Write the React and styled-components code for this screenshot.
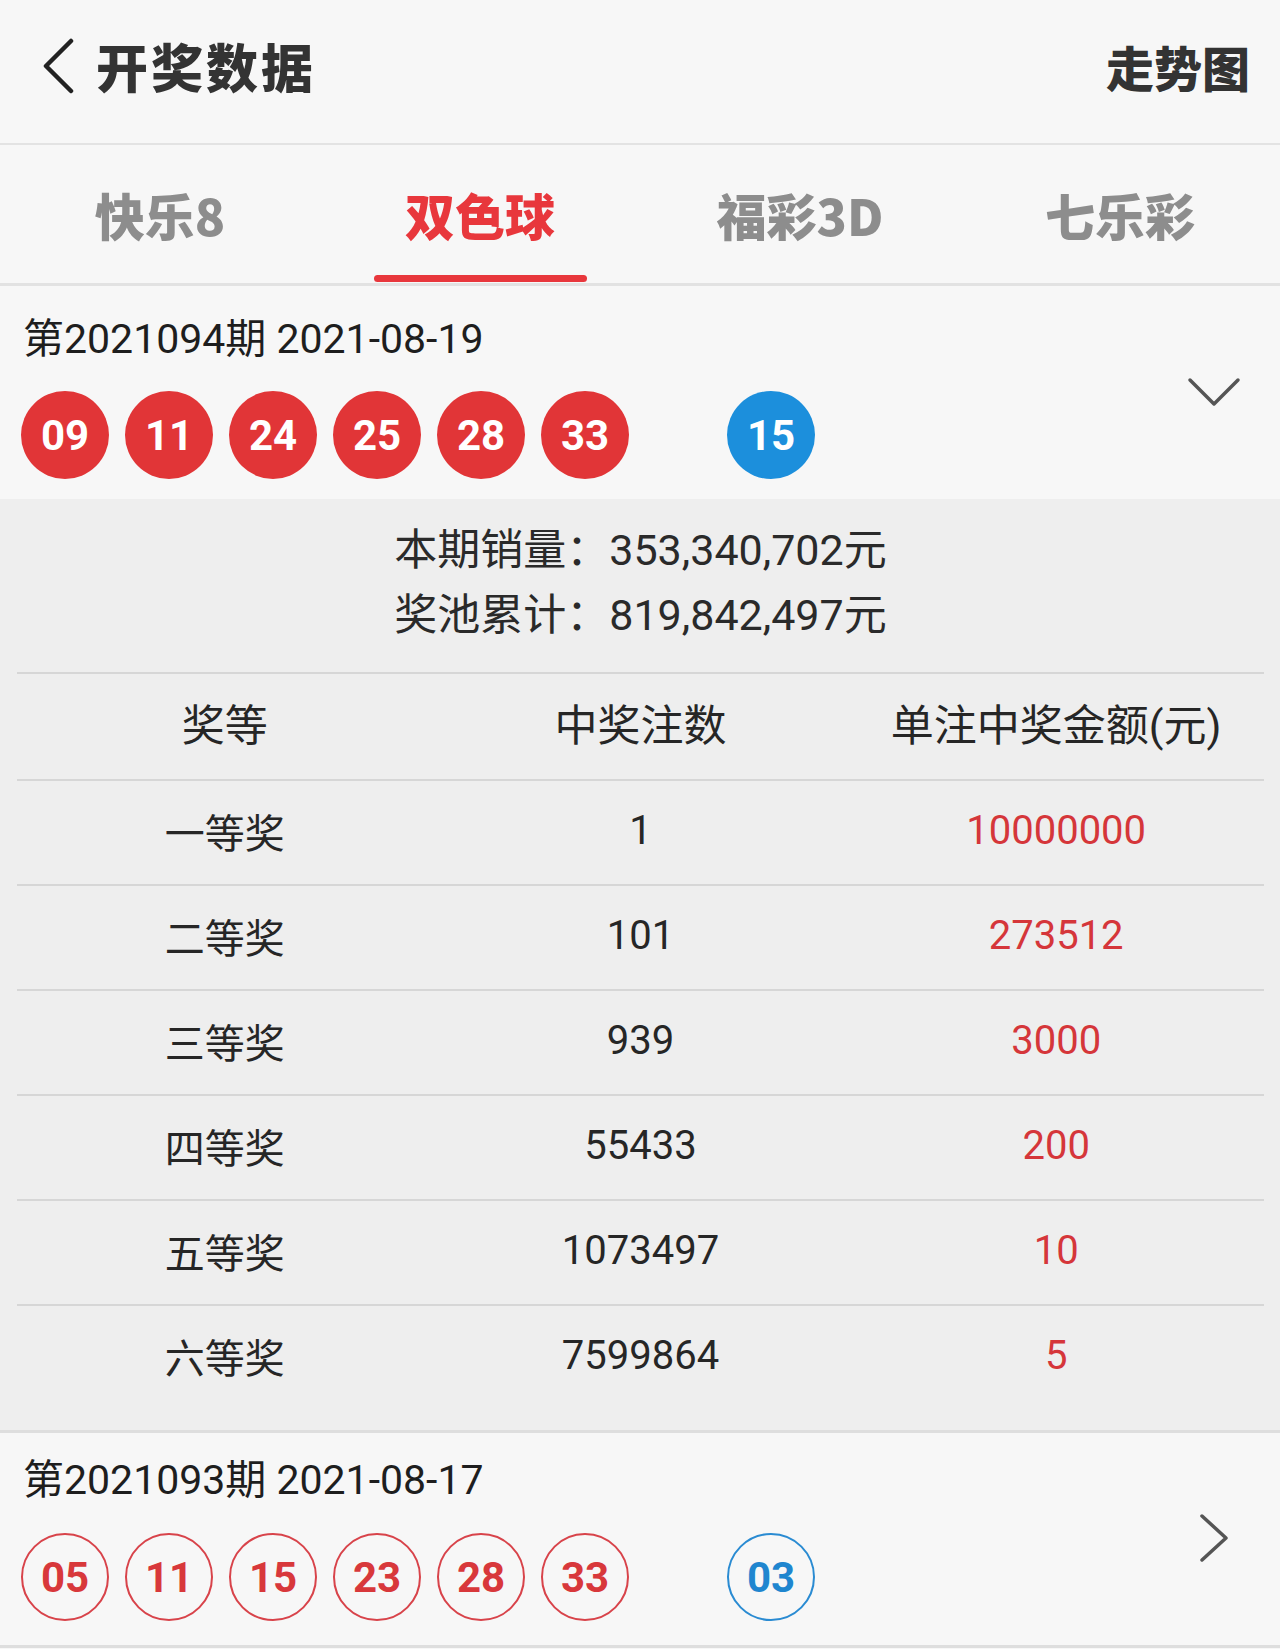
import React from "react";
import styled, { createGlobalStyle } from "styled-components";

const Global = createGlobalStyle`
  html, body { margin: 0; padding: 0; background: #f7f7f7; }
  body { font-family: "Roboto", "Noto Sans CJK SC", sans-serif; color: #222; }
  * { box-sizing: border-box; }
`;

const Page = styled.div`
  width: 1280px;
  background: #f7f7f7;
`;

const Header = styled.header`
  height: 143px;
  display: flex;
  align-items: center;
  padding: 0 30px 12px 40px;
`;

const BackButton = styled.button`
  border: 0;
  background: none;
  padding: 0;
  display: flex;
  align-items: center;
  cursor: pointer;
`;

const Title = styled.h1`
  margin: 0 0 0 20px;
  font-family: "Noto Sans CJK SC", sans-serif;
  font-weight: 900;
  font-size: 52px;
  letter-spacing: 3px;
  color: #333;
  line-height: 1;
`;

const TrendLink = styled.a`
  margin-left: auto;
  font-family: "Noto Sans CJK SC", sans-serif;
  font-weight: 900;
  font-size: 48px;
  color: #333;
  line-height: 1;
  text-decoration: none;
`;

const TabBar = styled.nav`
  height: 143px;
  border-top: 2px solid #e3e3e3;
  border-bottom: 3px solid #e2e2e2;
  display: grid;
  grid-template-columns: repeat(4, 1fr);
`;

const Tab = styled.div`
  position: relative;
  display: flex;
  align-items: center;
  justify-content: center;
  padding-top: 0;
  font-family: "Noto Sans CJK SC", sans-serif;
  font-weight: 900;
  font-size: 50px;
  color: ${(p) => (p.$active ? "#e8373c" : "#8d8d8d")};
  &::after {
    content: "";
    display: ${(p) => (p.$active ? "block" : "none")};
    position: absolute;
    left: 50%;
    bottom: 1px;
    width: 213px;
    height: 7px;
    margin-left: -106px;
    border-radius: 4px;
    background: #e8373c;
  }
`;

const DrawCard = styled.section`
  display: flex;
  align-items: center;
  padding: ${(p) => (p.$compact ? "21px 39px 24px 21px" : "27px 39px 20px 21px")};
  border-top: ${(p) => (p.$compact ? "3px solid #dedede" : "0")};
  border-bottom: ${(p) => (p.$compact ? "3px solid #dedede" : "0")};
  background: #f7f7f7;
`;

const DrawInfo = styled.div`
  flex: 1;
  display: flex;
  flex-direction: column;
`;

const IssueText = styled.div`
  font-size: 41px;
  line-height: 52px;
  color: #1e1e1e;
  padding-left: 2px;
`;

const BallRow = styled.div`
  display: flex;
  gap: 16px;
  margin-top: ${(p) => (p.$compact ? "27px" : "26px")};
`;

const RED = "#e13537";
const BLUE = "#1c8fdc";

const Ball = styled.div`
  width: 88px;
  height: 88px;
  border-radius: 50%;
  display: flex;
  align-items: center;
  justify-content: center;
  font-family: "Roboto", sans-serif;
  font-weight: 700;
  font-size: 42px;
  margin-left: ${(p) => (p.$blue ? "82px" : "0")};
  background: ${(p) => (p.$hollow ? "transparent" : p.$blue ? BLUE : RED)};
  color: ${(p) => (p.$hollow ? (p.$blue ? "#1f86cf" : "#d8383b") : "#fff")};
  border: ${(p) =>
    p.$hollow ? `2px solid ${p.$blue ? "#2a8bd2" : "#d8434a"}` : "0"};
`;

const IconSlot = styled.div`
  display: flex;
  align-items: center;
  margin-right: ${(p) => p.$offset || 0}px;
  margin-top: ${(p) => p.$lift || 0}px;
`;

const Panel = styled.div`
  background: #eeeeee;
  padding: 19px 16px 21px 17px;
`;

const Summary = styled.div`
  display: flex;
  flex-direction: column;
  align-items: center;
  padding-bottom: 24px;
`;

const SummaryLine = styled.div`
  font-size: 43px;
  line-height: 65px;
  color: #2a2a2a;
`;

const Table = styled.div`
  display: flex;
  flex-direction: column;
`;

const Row = styled.div`
  display: grid;
  grid-template-columns: repeat(3, 1fr);
  align-items: center;
  height: ${(p) => (p.$head ? "107px" : "105px")};
  border-top: 2px solid #d6d6d6;
`;

const Cell = styled.div`
  text-align: center;
  font-size: ${(p) => (p.$head ? "43px" : "40px")};
  color: ${(p) => (p.$red ? "#d5363a" : "#262626")};
  margin-top: ${(p) => (p.$head ? "-10px" : "-4px")};
`;

const ChevronDown = () => (
  <svg width="54" height="32" viewBox="0 0 54 32" fill="none">
    <path d="M3 4 L27 28 L51 4" stroke="#555" strokeWidth="3.5" strokeLinecap="round" strokeLinejoin="round" />
  </svg>
);

const ChevronRight = () => (
  <svg width="34" height="50" viewBox="0 0 34 50" fill="none">
    <path d="M5 3 L29 25 L5 47" stroke="#555" strokeWidth="3.5" strokeLinecap="round" strokeLinejoin="round" />
  </svg>
);

const BackIcon = () => (
  <svg width="36" height="56" viewBox="0 0 36 56" fill="none">
    <path d="M31 3 L6 28 L31 53" stroke="#222" strokeWidth="4.5" strokeLinecap="round" strokeLinejoin="round" />
  </svg>
);

const draws = [
  { issue: "第2021094期 2021-08-19", reds: ["09", "11", "24", "25", "28", "33"], blue: "15" },
  { issue: "第2021093期 2021-08-17", reds: ["05", "11", "15", "23", "28", "33"], blue: "03" },
];

const prizes = [
  ["一等奖", "1", "10000000"],
  ["二等奖", "101", "273512"],
  ["三等奖", "939", "3000"],
  ["四等奖", "55433", "200"],
  ["五等奖", "1073497", "10"],
  ["六等奖", "7599864", "5"],
];

const tabs = ["快乐8", "双色球", "福彩3D", "七乐彩"];

function Draw({ draw, hollow, compact, children }) {
  return (
    <DrawCard $compact={compact}>
      <DrawInfo>
        <IssueText>{draw.issue}</IssueText>
        <BallRow $compact={compact}>
          {draw.reds.map((n, i) => (
            <Ball key={i} $hollow={hollow}>{n}</Ball>
          ))}
          <Ball $blue $hollow={hollow}>{draw.blue}</Ball>
        </BallRow>
      </DrawInfo>
      {children}
    </DrawCard>
  );
}

export default function App() {
  return (
    <Page>
      <Global />
      <Header>
        <BackButton aria-label="返回">
          <BackIcon />
        </BackButton>
        <Title>开奖数据</Title>
        <TrendLink>走势图</TrendLink>
      </Header>
      <TabBar>
        {tabs.map((t, i) => (
          <Tab key={t} $active={i === 1}>{t}</Tab>
        ))}
      </TabBar>
      <Draw draw={draws[0]}>
        <IconSlot $lift={-8}>
          <ChevronDown />
        </IconSlot>
      </Draw>
      <Panel>
        <Summary>
          <SummaryLine>本期销量：353,340,702元</SummaryLine>
          <SummaryLine>奖池累计：819,842,497元</SummaryLine>
        </Summary>
        <Table>
          <Row $head>
            <Cell $head>奖等</Cell>
            <Cell $head>中奖注数</Cell>
            <Cell $head>单注中奖金额(元)</Cell>
          </Row>
          {prizes.map(([name, count, amount]) => (
            <Row key={name}>
              <Cell>{name}</Cell>
              <Cell>{count}</Cell>
              <Cell $red>{amount}</Cell>
            </Row>
          ))}
        </Table>
      </Panel>
      <Draw draw={draws[1]} hollow compact>
        <IconSlot $offset={10}>
          <ChevronRight />
        </IconSlot>
      </Draw>
    </Page>
  );
}
